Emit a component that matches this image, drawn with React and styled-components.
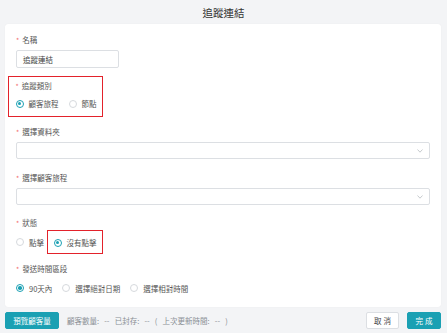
import React from 'react';
import styled, { createGlobalStyle } from 'styled-components';

const teal = '#1aa0b3';

const GlobalStyle = createGlobalStyle`
    body {
        margin: 0;
        background: #f3f4f6;
        font-family: "Noto Sans CJK TC", "Noto Sans", sans-serif;
    }
`

const Page = styled.div`
    width: 447px;
    height: 333px;
    display: flex;
    flex-direction: column;
`

const Title = styled.div`
    height: 24px;
    display: flex;
    align-items: center;
    justify-content: center;
    font-size: 10.5px;
    color: #333;
    padding-top: 1px;
    box-sizing: border-box;
`

const Card = styled.div`
    margin: 0 6px 0 5px;
    height: 283px;
    background: #fff;
    border-radius: 3px;
    box-shadow: 0 0 1px rgba(0,0,0,0.08);
    padding: 11px 11px 0 11px;
    box-sizing: border-box;
    display: flex;
    flex-direction: column;
`

const Field = styled.div`
    display: flex;
    flex-direction: column;
    align-items: flex-start;
    margin-top: ${p => p.top || 0}px;
    gap: ${p => p.gap || 5}px;
`

const HighlightBlock = styled.div`
    border: 1.5px solid #e3222b;
    margin: 0 0 0 -8px;
    padding: 3.5px 8px 7.5px 6.5px;
    width: 95px;
    box-sizing: border-box;
    display: flex;
    flex-direction: column;
    gap: 8px;
`

const HighlightInline = styled.span`
    display: inline-flex;
    align-items: center;
    border: 1.5px solid #e3222b;
    padding: 6px 5.5px 5px 5.5px;
    margin: -7.5px -7px;
`

const Label = styled.div`
    font-size: 7.5px;
    line-height: 10px;
    color: #555;
    display: flex;
    align-items: center;
    white-space: nowrap;
`

const Star = styled.span`
    color: #f26d6d;
    margin-right: 3px;
    font-size: 7px;
`

const TextInput = styled.div`
    width: 103px;
    height: 18px;
    border: 1px solid #dcdfe3;
    border-radius: 2px;
    box-sizing: border-box;
    font-size: 7.5px;
    color: #444;
    display: flex;
    align-items: center;
    padding-left: 6px;
`

const Select = styled.div`
    width: 414px;
    height: 17px;
    border: 1px solid #dcdfe3;
    border-radius: 2px;
    box-sizing: border-box;
    display: flex;
    align-items: center;
    justify-content: flex-end;
    padding-right: 6px;
`

const RadioRow = styled.div`
    display: flex;
    align-items: center;
    height: 10px;
    gap: 10px;
    white-space: nowrap;
`

const RadioItem = styled.span`
    display: inline-flex;
    align-items: center;
    gap: 5px;
    font-size: 7.5px;
    color: #555;
    white-space: nowrap;
    flex-shrink: 0;
`

const Circle = styled.span`
    width: 8px;
    height: 8px;
    flex-shrink: 0;
    border-radius: 50%;
    box-sizing: border-box;
    border: 1px solid ${p => p.checked ? teal : '#d6d9dd'};
    display: inline-flex;
    align-items: center;
    justify-content: center;
    &::after {
        content: '';
        width: 3.5px;
        height: 3.5px;
        border-radius: 50%;
        background: ${p => p.checked ? teal : 'transparent'};
    }
`

const Footer = styled.div`
    flex: 1;
    display: flex;
    align-items: center;
    padding: 0 6px 0 5px;
    gap: 8px;
`

const Button = styled.button`
    height: 17px;
    border-radius: 2px;
    font-family: inherit;
    font-size: 7.5px;
    padding: 0;
    letter-spacing: ${p => p.spaced ? 2 : 0}px;
    text-indent: ${p => p.spaced ? 2 : 0}px;
    border: 1px solid ${p => p.primary ? teal : '#dcdfe3'};
    background: ${p => p.primary ? teal : '#fff'};
    color: ${p => p.primary ? '#fff' : '#444'};
    display: flex;
    align-items: center;
    justify-content: center;
    width: ${p => p.w}px;
    flex-shrink: 0;
    white-space: nowrap;
    box-sizing: border-box;
`

const Info = styled.div`
    flex: 1;
    font-size: 7.5px;
    color: #8a8f95;
    word-spacing: 3.5px;
    white-space: nowrap;
`

const Chevron = () => (
    <svg width="6" height="4" viewBox="0 0 6 4">
        <polyline points="0.5,0.5 3,3.2 5.5,0.5" fill="none" stroke="#b8bcc1" strokeWidth="0.8" />
    </svg>
)

const Radio = ({ checked, children }) => (
    <RadioItem>
        <Circle checked={checked} />
        {children}
    </RadioItem>
)

const App = () => {
    return (<Page>
        <GlobalStyle />
        <Title>追蹤連結</Title>
        <Card>
            <Field>
                <Label><Star>*</Star>名稱</Label>
                <TextInput>追蹤連結</TextInput>
            </Field>
            <Field top={8}>
                <HighlightBlock>
                    <Label><Star>*</Star>追蹤類別</Label>
                    <RadioRow>
                        <Radio checked>顧客旅程</Radio>
                        <Radio>節點</Radio>
                    </RadioRow>
                </HighlightBlock>
            </Field>
            <Field top={10}>
                <Label><Star>*</Star>選擇資料夾</Label>
                <Select><Chevron /></Select>
            </Field>
            <Field top={14}>
                <Label><Star>*</Star>選擇顧客旅程</Label>
                <Select><Chevron /></Select>
            </Field>
            <Field top={13} gap={9}>
                <Label><Star>*</Star>狀態</Label>
                <RadioRow>
                    <Radio>點擊</Radio>
                    <HighlightInline>
                        <Radio checked>沒有點擊</Radio>
                    </HighlightInline>
                </RadioRow>
            </Field>
            <Field top={17} gap={9}>
                <Label><Star>*</Star>發送時間區段</Label>
                <RadioRow>
                    <Radio checked>90天內</Radio>
                    <Radio>選擇絕對日期</Radio>
                    <Radio>選擇相對時間</Radio>
                </RadioRow>
            </Field>
        </Card>
        <Footer>
            <Button primary w={54}>預覽顧客量</Button>
            <Info>顧客數量: -- 已封存: -- ( 上次更新時間: -- )</Info>
            <Button w={33} spaced>取消</Button>
            <Button primary w={34} spaced>完成</Button>
        </Footer>
    </Page>);
}

export default App;
